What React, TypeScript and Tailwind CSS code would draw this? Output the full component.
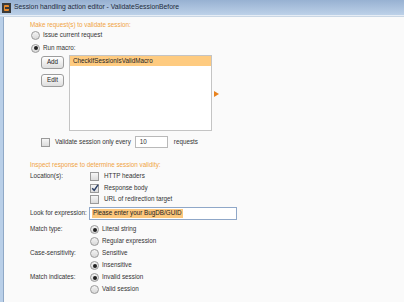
import React from "react";

const font = { fontFamily: '"Liberation Sans", Arial, sans-serif' };

function Radio({ checked }: { checked?: boolean }) {
  return (
    <span className="relative inline-flex h-[9px] w-[9px] shrink-0 items-center justify-center rounded-full border border-[#9a9a9a] bg-gradient-to-b from-[#f4f4f4] to-[#d8d8d8]">
      {checked && <span className="h-[4px] w-[4px] rounded-full bg-[#222]" />}
    </span>
  );
}

function Check({ checked }: { checked?: boolean }) {
  return (
    <span className="relative inline-flex h-[9px] w-[9px] shrink-0 items-center justify-center border border-[#9a9a9a] bg-gradient-to-b from-[#f6f6f6] to-[#dcdcdc]">
      {checked && (
        <svg width="8" height="8" viewBox="0 0 8 8" className="absolute -top-[1px] left-0">
          <path d="M1.2 4.2 L3.2 6.4 L7 0.8" fill="none" stroke="#2b3f66" strokeWidth="1.5" />
        </svg>
      )}
    </span>
  );
}

function Btn({ label }: { label: string }) {
  return (
    <div className="flex h-[13px] w-[23px] items-center justify-center rounded-[3px] border border-[#9c9c9c] bg-gradient-to-b from-[#ffffff] to-[#dedede] text-[6.3px] text-[#222]">
      {label}
    </div>
  );
}

function Row({
  label,
  children,
  h = "h-[11px]",
}: {
  label?: string;
  children: React.ReactNode;
  h?: string;
}) {
  return (
    <div className={`flex items-center ${h}`}>
      <div className="w-[60px] shrink-0 text-[#333]">{label}</div>
      <div className="flex items-center gap-[3px]">{children}</div>
    </div>
  );
}

export default function App() {
  return (
    <div
      className="flex h-[302px] w-[404px] flex-col overflow-hidden bg-[#fafafa] text-[6.3px] leading-none text-[#333]"
      style={font}
    >
      {/* title bar */}
      <div className="flex h-[15px] shrink-0 items-center gap-[3px] bg-gradient-to-b from-[#97b1d2] to-[#bdd1e8] pl-[2px]">
        <div className="relative h-[10px] w-[9px] bg-[#3a3a3a]">
          <span className="absolute left-[2px] top-[2px] h-[6px] w-[5px] rounded-[1px] bg-[#e8892b]" />
          <span className="absolute left-[3px] top-[4px] h-[2px] w-[4px] bg-[#3a3a3a]" />
        </div>
        <span className="text-[6.8px] text-[#1d2a3a]">
          Session handling action editor - ValidateSessionBefore
        </span>
      </div>
      <div className="h-[2px] shrink-0 border-t border-[#e6edf5] bg-[#c9d6e4]" />

      <div className="flex flex-1">
        <div className="w-[3px] shrink-0 bg-[#b9cfe8]" />
        <div className="w-px shrink-0 bg-[#8fa8c6]" />
        <div className="flex flex-1 flex-col pl-[26px]">
          <div className="mt-[3px] flex h-[10px] items-center text-[#f0a33f]">
            Make request(s) to validate session:
          </div>
          <div className="flex h-[10px] items-center gap-[3px] pl-[1px]">
            <Radio />
            <span>Issue current request</span>
          </div>
          <div className="mt-[3px] flex h-[10px] items-center gap-[3px] pl-[1px]">
            <Radio checked />
            <span>Run macro:</span>
          </div>

          <div className="mt-[2px] flex pl-[11px]">
            <div className="flex flex-col gap-[5px] pt-[1px]">
              <Btn label="Add" />
              <Btn label="Edit" />
            </div>
            <div className="ml-[5px] h-[76px] w-[143px] border border-[#c4c4c4] bg-white">
              <div className="flex h-[10px] items-center bg-[#fecb80] pl-[3px] text-[#222]">
                CheckIfSessionIsValidMacro
              </div>
            </div>
            <div className="ml-[2px] pt-[36px]">
              <svg width="5" height="6" viewBox="0 0 5 6">
                <path d="M0 0 L5 3 L0 6 Z" fill="#e8821e" />
              </svg>
            </div>
          </div>

          <div className="mt-[5px] flex h-[12px] items-center pl-[11px]">
            <Check />
            <span className="ml-[5px]">Validate session only every</span>
            <div className="ml-[4px] flex h-[12px] w-[33px] items-center border border-[#b9b9b9] bg-white pl-[4px]">
              10
            </div>
            <span className="ml-[6px]">requests</span>
          </div>

          <div className="mt-[12px] flex h-[10px] items-center text-[#f0a33f]">
            Inspect response to determine session validity:
          </div>

          <div className="mt-[1px]">
            <Row label="Location(s):">
              <Check />
              <span className="ml-[2px]">HTTP headers</span>
            </Row>
          </div>
          <div className="mt-[1px]">
            <Row>
              <Check checked />
              <span className="ml-[2px]">Response body</span>
            </Row>
          </div>
          <Row>
            <Check />
            <span className="ml-[2px]">URL of redirection target</span>
          </Row>

          <div className="mt-[2px] flex h-[13px] items-center">
            <div className="w-[59px] shrink-0">Look for expression:</div>
            <div className="flex h-[13px] w-[148px] items-center border border-[#8fa7c8] bg-white pl-[2px]">
              <span className="bg-[#fcc77c] px-[1px] py-[1px] text-[#222]">
                Please enter your BugDB/GUID
              </span>
            </div>
          </div>

          <div className="mt-[4px] flex flex-col gap-[1px]">
            <Row label="Match type:">
              <Radio checked />
              <span>Literal string</span>
            </Row>
            <Row>
              <Radio />
              <span>Regular expression</span>
            </Row>
            <Row label="Case-sensitivity:">
              <Radio />
              <span>Sensitive</span>
            </Row>
            <Row>
              <Radio checked />
              <span>Insensitive</span>
            </Row>
            <Row label="Match indicates:">
              <Radio checked />
              <span>Invalid session</span>
            </Row>
            <Row>
              <Radio />
              <span>Valid session</span>
            </Row>
          </div>
        </div>
      </div>
    </div>
  );
}
